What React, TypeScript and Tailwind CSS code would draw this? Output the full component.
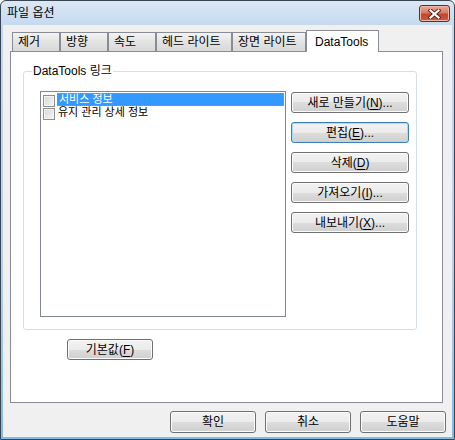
import type { ReactNode } from "react";

const FONT = "font-['Liberation_Sans','Noto_Sans_CJK_KR',sans-serif]";

const TABS = [
  { label: "제거", w: "w-[48px]" },
  { label: "방향", w: "w-[48px]" },
  { label: "속도", w: "w-[48px]" },
  { label: "헤드 라이트", w: "w-[76px]" },
  { label: "장면 라이트", w: "w-[74px]" },
];

function Mn({ children }: { children: ReactNode }) {
  return <span className="underline underline-offset-[2px]">{children}</span>;
}

function Button({
  children,
  w,
  h = "h-[21px]",
  focused = false,
}: {
  children: ReactNode;
  w: string;
  h?: string;
  focused?: boolean;
}) {
  return (
    <div
      className={`${w} ${h} shrink-0 flex items-center justify-center rounded-[3px] border text-[12px] leading-none text-black bg-[linear-gradient(to_bottom,#f2f2f2_0%,#ebebeb_50%,#dddddd_50%,#cfcfcf_100%)] ${
        focused
          ? "border-[#3c7fb1] shadow-[inset_0_0_0_1px_#a8dcf6]"
          : "border-[#707070] shadow-[inset_0_0_0_1px_#fbfbfb]"
      }`}
    >
      {children}
    </div>
  );
}

function Check() {
  return (
    <div className="w-[12px] h-[12px] shrink-0 border border-[#8e8f8f] bg-[linear-gradient(135deg,#d6d6d6,#f6f6f6)] shadow-[inset_0_0_0_1px_#f4f4f4]" />
  );
}

export default function App() {
  return (
    <div
      className={`${FONT} w-[455px] h-[440px] flex flex-col border border-[#3a4552] rounded-t-[6px] bg-[linear-gradient(to_bottom,#dbe8f6_0%,#c3d8ee_6%,#b7d1ec_60%,#7fbbe8_100%)] overflow-hidden select-none`}
    >
      {/* title bar */}
      <div className="h-[24px] shrink-0 flex items-start justify-between pl-[6px] pr-[4px]">
        <span className="mt-[5px] text-[12px] leading-[14px] text-black">파일 옵션</span>
        <div className="mt-[4px] w-[31px] h-[17px] rounded-[3px] border border-[#6a2a1e] bg-[linear-gradient(to_bottom,#e9a996_0%,#d67c66_45%,#c2472f_55%,#c95a40_100%)] shadow-[inset_0_0_0_1px_#f0b8a8] flex items-center justify-center">
          <svg width="13" height="10" viewBox="0 0 13 10">
            <path d="M2.5 1.5 L10.5 8.5 M10.5 1.5 L2.5 8.5" stroke="#5a2418" strokeWidth="4" strokeLinecap="square" />
            <path d="M2.5 1.5 L10.5 8.5 M10.5 1.5 L2.5 8.5" stroke="#ffffff" strokeWidth="2.2" strokeLinecap="square" />
          </svg>
        </div>
      </div>

      {/* client area */}
      <div className="flex-1 mx-[2px] mb-[2px] bg-[#f0f0f0] flex flex-col">
        {/* tabs */}
        <div className="flex items-end pl-[9px] pt-[5px] h-[26px]">
          {TABS.map((t) => (
            <div
              key={t.label}
              className={`${t.w} h-[19px] shrink-0 flex items-center pl-[5px] border-t border-l border-r border-[#898c95] bg-[linear-gradient(to_bottom,#f3f3f3,#e3e3e3_50%,#d9d9d9)] text-[12px] leading-none text-black whitespace-nowrap`}
            >
              {t.label}
            </div>
          ))}
          <div className="relative z-10 -mb-px w-[73px] h-[22px] shrink-0 flex items-center pl-[8px] border-t border-l border-r border-[#898c95] bg-white text-[12px] leading-none text-black">
            DataTools
          </div>
        </div>

        {/* tab panel */}
        <div className="ml-[7px] w-[433px] h-[352px] border border-[#898c95] bg-white flex flex-col">
          <div className="relative ml-[12px] mt-[19px] w-[394px] h-[259px] rounded-[3px] border border-[#d5dfe5] flex items-start">
            <span className="absolute -top-[8px] left-[8px] px-[1px] bg-white text-[12px] leading-[14px] text-black">
              DataTools 링크
            </span>

            {/* list box */}
            <div className="ml-[16px] mt-[19px] w-[246px] h-[226px] border border-[#828790] bg-white flex flex-col pt-px text-[11px] leading-[13px]">
              <div className="h-[13px] flex items-start">
                <div className="ml-[2px] mt-[2px]">
                  <Check />
                </div>
                <div className="ml-[2px] flex-1 h-[13px] mr-px bg-[#3399ff] text-white border border-dotted border-[#d08a40] pl-[1px] flex items-center">
                  서비스 정보
                </div>
              </div>
              <div className="h-[13px] flex items-start">
                <div className="ml-[2px] mt-[2px]">
                  <Check />
                </div>
                <div className="ml-[3px] h-[13px] text-black flex items-center">유지 관리 상세 정보</div>
              </div>
            </div>

            {/* side buttons */}
            <div className="ml-[5px] mt-[20px] flex flex-col gap-[9px]">
              <Button w="w-[118px]">
                새로 만들기(<Mn>N</Mn>)...
              </Button>
              <Button w="w-[118px]" focused>
                편집(<Mn>E</Mn>)...
              </Button>
              <Button w="w-[118px]">
                삭제(<Mn>D</Mn>)
              </Button>
              <Button w="w-[118px]">
                가져오기(<Mn>I</Mn>)...
              </Button>
              <Button w="w-[118px]">
                내보내기(<Mn>X</Mn>)...
              </Button>
            </div>
          </div>

          <div className="ml-[56px] mt-[9px]">
            <Button w="w-[86px]">
              기본값(<Mn>F</Mn>)
            </Button>
          </div>
        </div>

        {/* dialog buttons */}
        <div className="mt-[8px] flex justify-end gap-[9px] pr-[6px]">
          <Button w="w-[86px]" h="h-[22px]">
            확인
          </Button>
          <Button w="w-[86px]" h="h-[22px]">
            취소
          </Button>
          <Button w="w-[86px]" h="h-[22px]">
            도움말
          </Button>
        </div>
      </div>
    </div>
  );
}
